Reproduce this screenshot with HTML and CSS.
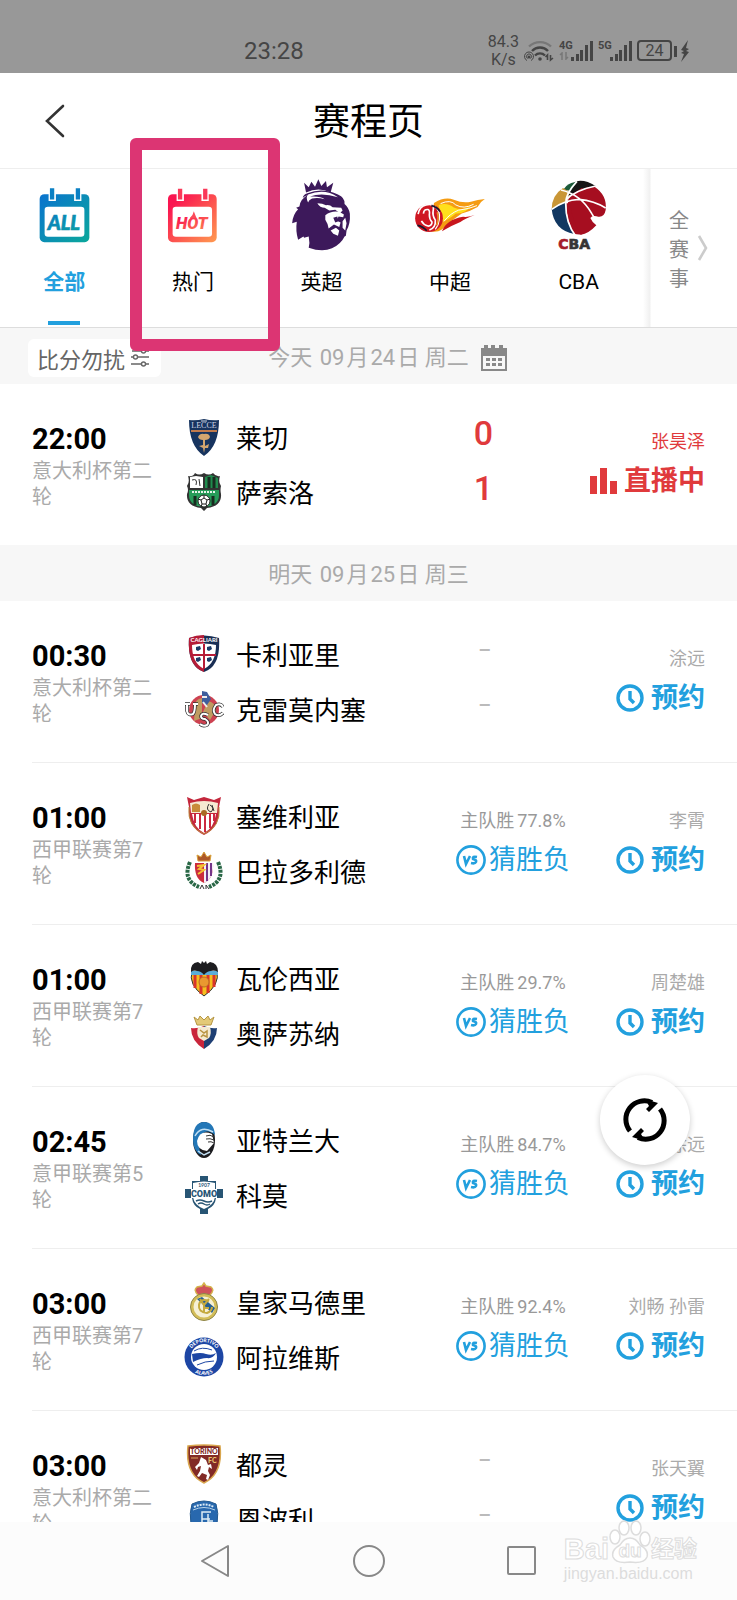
FILE: index.html
```html
<!DOCTYPE html>
<html lang="zh-CN">
<head>
    <meta charset="UTF-8">
    <meta name="viewport" content="width=device-width, initial-scale=1.0">
    <title>赛程页</title>
    <link rel="stylesheet" href="styles.css">
</head>
<body>
    <!-- 公用图标 -->
    <svg class="sprite" aria-hidden="true">
        <symbol id="icon-clock" viewBox="0 0 28 28">
            <circle cx="14" cy="14" r="12" fill="none" stroke="currentColor" stroke-width="3.400"/>
            <path d="M14 7v8l4 4" fill="none" stroke="currentColor" stroke-width="3.400"/>
        </symbol>
        <symbol id="icon-vs" viewBox="0 0 30 30">
            <circle cx="15" cy="15" r="13.6" fill="none" stroke="currentColor" stroke-width="2.6"/>
            <path d="M8 11l2 8 4-8M21 12q-5-1-4 2 4 1 3 3-1 2-5 1" fill="none" stroke="currentColor" stroke-width="2.600"/>
        </symbol>
        <symbol id="icon-signal" viewBox="0 0 22 22">
            <path d="M0 17h3v4H0zM5 14h3v7H5zM9 10h3v11H9zM14 5h3v16h-3zM19 1h3v20h-3z" fill="currentColor"/>
        </symbol>
    </svg>

    <div class="status-bar">
        <span class="clock">23:28</span>
        <div class="status-icons">
            <span class="speed">84.3<br>K/s</span>
            <svg class="wifi" viewBox="0 0 30 24" width="30" height="24" fill="none" stroke="#454545" stroke-width="2.4">
                <path d="M5 7.500a16 16 0 0 1 22 0" stroke="#777"/>
                <path d="M8 12a11 11 0 0 1 16 0M11 16.500a7 7 0 0 1 10 0"/>
                <circle cx="16" cy="20" r="1.800" fill="#454545" stroke="none"/>
                <circle cx="5" cy="18" r="1.500" fill="#454545" stroke="none"/>
                <path d="M3 21.500a4.500 4.500 0 1 1 4 0M3.500 19.500a2.500 2.500 0 1 1 3 0" stroke-width="1"/>
                <path d="M23.500 21v-5l-2 2M26.500 16v5l2.500-2" stroke-width="1.600"/>
            </svg>
            <div class="network">
                <span>4G
                    <svg viewBox="0 0 10 8" width="10" height="8" fill="none" stroke="#777" stroke-width="1.500"><path d="M3 8V1L1 3M7 0v7l2-2"/></svg>
                </span>
                <svg width="22" height="22"><use href="#icon-signal"/></svg>
            </div>
            <div class="network">
                <span>5G</span>
                <svg width="22" height="22"><use href="#icon-signal"/></svg>
            </div>
            <span class="battery">24</span>
            <svg class="bolt" viewBox="0 0 17 24" width="17" height="24" fill="#454545">
                <path d="M0 7h3v11H0zM14 1L7 11l3 1-3 2 3 1-3 8 8-10-3-1 3-2-3-1z"/>
            </svg>
        </div>
    </div>

    <header class="header">
        <button class="back" aria-label="返回">
            <svg viewBox="0 0 20 34" width="20" height="34" fill="none" stroke="#333" stroke-width="2.600" stroke-linecap="round"><path d="M18 2L2 17l16 15"/></svg>
        </button>
        <h1>赛程页</h1>
    </header>

    <nav class="leagues">
        <a href="#" class="league active">
            <span class="league-icon">
                <svg viewBox="0 0 160 174" width="53" height="58">
                    <defs>
                        <linearGradient id="blue" x1="0" y1="0" x2="1" y2="1"><stop offset="0" stop-color="#0a72cf"/><stop offset="1" stop-color="#0ba89b"/></linearGradient>
                    </defs>
                    <rect x="5" y="24" width="150" height="145" rx="14" fill="url(#blue)"/>
                    <path d="M32 20h22v25H32zM109 20h22v25h-22z" fill="#fff"/>
                    <path d="M36 6h13v34H36zM114 6h13v34h-13z" fill="#0b80c4"/>
                    <rect x="20" y="62" width="120" height="91" rx="10" fill="#fff"/>
                    <text x="78" y="132" text-anchor="middle" font-family="Lato, sans-serif" font-size="60" font-weight="900" font-style="italic" fill="url(#blue)" stroke="#098fae" stroke-width="2">ALL</text>
                </svg>
            </span>
            <span class="league-name">全部</span>
        </a>
        <a href="#" class="league">
            <span class="league-icon">
                <svg viewBox="0 0 160 174" width="53" height="58">
                    <defs>
                        <linearGradient id="red" x1="0" y1="0" x2="1" y2="1"><stop offset="0.150" stop-color="#fa1550"/><stop offset="1" stop-color="#ff9b50"/></linearGradient>
                    </defs>
                    <rect x="6" y="24" width="147" height="145" rx="14" fill="url(#red)"/>
                    <path d="M32 20h22v25H32zM107 20h22v25h-22z" fill="#fff"/>
                    <path d="M36 8h13v32H36zM112 8h13v32h-13z" fill="#fa3858"/>
                    <rect x="20" y="62" width="119" height="91" rx="10" fill="#fff"/>
                    <text x="78" y="130" text-anchor="middle" font-family="Roboto, sans-serif" font-size="50" font-weight="900" font-style="italic" fill="url(#red)">HOT</text>
                    <path d="M84 76q-2 12-12 20h20z" fill="#fb4a5a"/>
                </svg>
            </span>
            <span class="league-name">热门</span>
        </a>
        <a href="#" class="league">
            <span class="league-icon">
                <svg viewBox="0 0 186 226" width="62" height="75" fill="#3d195b">
                    <path d="M48 44L42 14l14 14 8-17 11 15 10-22 9 20 14-15 3 19 19-14-8 30Q86 26 48 44z"/>
                    <path d="M52 46q-12 4-14 14 6-6 14-8-22 12-24 34l-10 4 6 4q-16 16-18 42l14-4q-4 28 4 54l16-10 2 4 14-4q4 20 0 34 40 14 70 2 28-14 38-36l4-2 2-16q12-20 10-50-2-18-16-30 2-18-20-28Q98 28 52 46z"/>
                    <g fill="#fff">
                        <path d="M54 50q50-20 90 8-50-16-84-2 32-2 44 8-20-6-38-2-10 4-12 12-8-16 0-24z"/>
                        <path d="M82 76q16 0 26 6 12-2 20 6l26 2 4 8-8 8-14-10-18 2-14-8q-14 0-22-14z"/>
                        <path d="M106 112q18-14 42-10l14 8-2 8-14-2-6 12 12 6-4 14-16-8-16 12q-2-14-10-26z"/>
                        <path d="M158 130l8-10 4 16-4 22-8-8zM122 158l16-8 10 8-4 16-14-6z"/>
                    </g>
                    <path d="M130 120l12-4 4 14-10 4z"/>
                </svg>
            </span>
            <span class="league-name">英超</span>
        </a>
        <a href="#" class="league">
            <span class="league-icon">
                <svg viewBox="0 0 220 112" width="73" height="37">
                    <path d="M60 18Q92-2 120 8q28 12 52 6 20-6 42-8-14 8-22 24-20 12-48 20-34 22-60 48-14 10-36 6z" fill="#f59c12"/>
                    <path d="M74 24q28-8 46 8 28 12 52-6-16 26-46 24-22 20-42 24z" fill="#ffe01c"/>
                    <path d="M84 104q14-36 64-44 20 2 36-6-30 12-44 22-30 12-56 28z" fill="#c8161d"/>
                    <path d="M80 20q30-14 46 4 24 14 54-2M90 74q18-24 44-34 34-4 56-14" fill="none" stroke="#fff" stroke-width="3"/>
                    <circle cx="45" cy="64" r="42" fill="#cf1722"/>
                    <path d="M12 52q4-24 24-28 26-6 22 14-4 18 6 32 2 24-18 30" fill="none" stroke="#fff" stroke-width="5"/>
                    <path d="M28 50q2-14 14-12 6 2 4 16 0 14 8 22 0 12-12 12-14-4-20-16" fill="none" stroke="#fff" stroke-width="5"/>
                    <path d="M62 28q18 14 14 40-2 18-12 30" fill="none" stroke="#fff" stroke-width="4"/>
                    <path d="M10 86q18 4 28 16M52 26q18 4 26 18" fill="none" stroke="#17192d" stroke-width="5"/>
                    <path d="M70 46q6 20-2 40" fill="none" stroke="#e98c25" stroke-width="5"/>
                </svg>
            </span>
            <span class="league-name">中超</span>
        </a>
        <a href="#" class="league">
            <span class="league-icon">
                <svg viewBox="0 0 168 210" width="56" height="70">
                    <path d="M52 56Q90 2 120 14q50 26 44 76-4 22-22 20-18-6-24 4 6 14 18 22-24 26-46 28-22-14-32-40-10-30-6-68z" fill="#a60e20"/>
                    <path d="M48 50Q56 16 76 4 102-2 134 18l-18 6-6-4-10 8-8-4-14 10z" fill="#151515"/>
                    <path d="M46 18Q60 6 78 5L60 32l-24-2z" fill="#1c5b3a"/>
                    <path d="M36 24l20 12-8 28-46 24Q2 46 36 24z" fill="#c99636"/>
                    <path d="M2 86l42-20q-2 54 26 96Q8 150 2 86z" fill="#113761"/>
                    <path d="M58 70q4 54 34 94l-22-2Q44 120 46 70z" fill="#a60e20"/>
                    <path d="M78 4Q44 40 44 70q0 60 30 98M2 88q38-28 82-30 46 4 80 26M30 30q60 14 92 70 14 22 20 38M44 60Q74 30 134 18" fill="none" stroke="#fff" stroke-width="5"/>
                    <text x="22" y="206" font-family="'DejaVu Sans', sans-serif" font-size="42" font-weight="700" fill="#353535" stroke="#353535" stroke-width="2"><tspan fill="#a61b2b" stroke="#a61b2b">C</tspan>BA</text>
                </svg>
            </span>
            <span class="league-name">CBA</span>
        </a>
        <button class="all-leagues">
            <span>全<br>赛<br>事</span>
            <svg viewBox="0 0 12 26" width="12" height="26" fill="none" stroke="#ccc" stroke-width="2.600"><path d="M2 1l7 12-7 12"/></svg>
        </button>
    </nav>

    <main class="schedule">
        <div class="date-bar today">
            <button class="no-disturb">比分勿扰
                <svg viewBox="0 0 18 18" width="18" height="18" fill="none" stroke="#666" stroke-width="1.400">
                    <path d="M1 2h9M15 2h3M0 8h2M7 8h11M0 15h10M15 15h3"/>
                    <circle cx="12.500" cy="2" r="2"/><circle cx="4.500" cy="8" r="2"/><circle cx="12.500" cy="15" r="2"/>
                </svg>
            </button>
            <h2>今天 <b>09</b>月<b>24</b>日 周二</h2>
            <button class="calendar" aria-label="选择日期">
                <svg viewBox="0 0 26 26" width="26" height="26" fill="#888">
                    <path d="M0 3h3V0h4v3h3V0h4v3h4V0h4v3h4v23H0zM2 11v13h22V11z" fill-rule="evenodd"/>
                    <path d="M5 13h4v3H5zM11 13h4v3h-4zM17 13h4v3h-4zM5 18h4v3H5zM11 18h4v3h-4zM17 18h4v3h-4z"/>
                </svg>
            </button>
        </div>

        <article class="match last">
            <div class="when">
                <time>22:00</time>
                <p>意大利杯第二轮</p>
            </div>
            <ul class="teams">
                <li>
                    <svg viewBox="0 0 40 40">
                        <path d="M5 3q7 1 15-1 8 2 15 1 0 26-15 36Q5 29 5 3z" fill="#17345f"/>
                        <path d="M7 14h26" stroke="#c07a4c" stroke-width="2"/>
                        <text x="20" y="11" text-anchor="middle" font-family="Liberation Serif, serif" font-size="8" fill="#cfd6e4">LECCE</text>
                        <path d="M17 4h6" stroke="#cfd6e4"/>
                        <path d="M14 20q2-4 6-3 5-1 6 3-1 3-5 3v6l4-2-1 4h-3l-1 5-1-5-4-2 4-1v-5q-4 0-5-3z" fill="#d3a66f"/>
                    </svg>
                    莱切
                </li>
                <li>
                    <svg viewBox="0 0 40 40">
                        <path d="M4 4q5 1 7-3 4 3 9 0 5 3 9 0 3 4 7 3-2 6 1 10-1 4 0 8 1 12-14 14l-3 3-3-3Q2 34 3 22q2-4 0-8 3-4 1-10z" fill="#333"/>
                        <path d="M6 5l6-1 7 1v11H6z" fill="#fff"/>
                        <path d="M21 5l6-2 7 3v10H21z" fill="#208a4d"/>
                        <path d="M5 18h30v5q0 11-15 12Q5 34 5 23z" fill="#269c59"/>
                        <path d="M25 5v11M30 5v11M11 24v9M29 24v9" stroke="#182b20" stroke-width="3"/>
                        <path d="M8 8q6-2 4 5M15 7l1 7" stroke="#333" fill="none"/>
                        <path d="M8 20h24" stroke="#e7f3ea" stroke-width="2" stroke-dasharray="2 1"/>
                        <circle cx="20" cy="29" r="6" fill="#fff" stroke="#222"/>
                        <path d="M20 26l3 2-1 4h-4l-1-4zM20 26v-3M23 28l3-1M22 32l1 3M18 32l-1 3M17 28l-3-1" fill="none" stroke="#222"/>
                    </svg>
                    萨索洛
                </li>
            </ul>
            <div class="score live"><span>0</span><span>1</span></div>
            <div class="watch live">
                <p>张昊泽</p>
                <button>
                    <svg viewBox="0 0 28 26" width="28" height="26" fill="currentColor"><path d="M1 8h7v18H1zM11 0h7v26h-7zM21 13h7v13h-7z"/></svg>
                    直播中
                </button>
            </div>
        </article>

        <div class="date-bar">
            <h2>明天 <b>09</b>月<b>25</b>日 周三</h2>
        </div>

        <article class="match">
            <div class="when">
                <time>00:30</time>
                <p>意大利杯第二轮</p>
            </div>
            <ul class="teams">
                <li>
                    <svg viewBox="0 0 40 40">
                        <path d="M5 4q15-5 30 0 2 28-15 34Q3 32 5 4z" fill="#192e54"/>
                        <path d="M5 4q7-3 15-3v37Q3 32 5 4z" fill="#b51c37"/>
                        <path d="M8 11q12-3 24 0 0 18-12 24Q8 29 8 11z" fill="#fff"/>
                        <path d="M20 10v25M8 21h24" stroke="#b51c37" stroke-width="2"/>
                        <text x="20" y="8" text-anchor="middle" font-family="Lato, sans-serif" font-size="6" font-weight="700" fill="#fff">CAGLIARI</text>
                        <path d="M12 13l4-1 1 3-3 2-2-1zM23 13l4-1 1 3-3 2-2-1zM12 24l4-1 1 3-3 2-2-1zM23 24l4-1 1 3-3 2-2-1z" fill="#1b3a66"/>
                    </svg>
                    卡利亚里
                </li>
                <li>
                    <svg viewBox="0 0 40 40">
                        <circle cx="20" cy="21" r="15" fill="#cd4251"/>
                        <path d="M11 17q0-7 7-8v20l-8 3zM24 12q8 2 8 9l-6 10-7-8z" fill="#bf9b61"/>
                        <path d="M18 2l5 1 4 7-4 6-5-2z" fill="#3f5e9d"/>
                        <path d="M18 8h5M19 13l4 5" stroke="#eee" stroke-width="2"/>
                        <path d="M1 15h5M3 15v7q1 5 6 3 2-2 2-10M9 15h5M24 26q-6-3-7 1 0 3 4 3 5 3 2 6-4 2-7-1M39 18q-2-4-7-2-4 5-1 9 4 3 8-1" fill="none" stroke="#333" stroke-width="3.500"/>
                        <path d="M1 15h5M3 15v7q1 5 6 3 2-2 2-10M9 15h5M24 26q-6-3-7 1 0 3 4 3 5 3 2 6-4 2-7-1M39 18q-2-4-7-2-4 5-1 9 4 3 8-1" fill="none" stroke="#fff" stroke-width="2"/>
                    </svg>
                    克雷莫内塞
                </li>
            </ul>
            <div class="score"><span>–</span><span>–</span></div>
            <div class="watch">
                <p>涂远</p>
                <button><svg width="28" height="28"><use href="#icon-clock"/></svg>预约</button>
            </div>
        </article>

        <article class="match">
            <div class="when">
                <time>01:00</time>
                <p>西甲联赛第7轮</p>
            </div>
            <ul class="teams">
                <li>
                    <svg viewBox="0 0 40 40">
                        <path d="M3 1l7 3 10-3 10 3 7-3-2 10q2 20-15 28Q3 31 5 11z" fill="#c4273c"/>
                        <path d="M6 7q14-4 28 0l-1 10H7z" fill="#f6ead2"/>
                        <path d="M8 18h24q-2 14-12 19Q10 32 8 18z" fill="#fff"/>
                        <path d="M11 18v9M16 18v15M21 18v18M26 18v14M30 18v7" stroke="#cc2940" stroke-width="2"/>
                        <path d="M8 9q4-3 8 0v7H8z" fill="#c88b3a"/>
                        <path d="M25 8q-4 6 2 8 4-4-1-7M28 9l2 6" stroke="#333" fill="none"/>
                        <circle cx="20" cy="17" r="3" fill="#a96a24"/>
                        <path d="M5 11q-2 20 15 27 17-7 15-27" fill="none" stroke="#b98a3b"/>
                    </svg>
                    塞维利亚
                </li>
                <li>
                    <svg viewBox="0 0 40 40">
                        <path d="M6 11q-8 18 9 25M34 11q8 18-9 25" fill="none" stroke="#2a6847" stroke-width="4" stroke-dasharray="3 1"/>
                        <path d="M14 10l-1-6 4 2 3-5 3 5 4-2-1 6z" fill="#ad5729" stroke="#d9a13b"/>
                        <path d="M11 12h18q1 16-9 20-10-4-9-20z" fill="#cb2c3d"/>
                        <path d="M20 12h9q1 16-9 20z" fill="#f4eef8"/>
                        <path d="M23 12v18M27 12v13" stroke="#753589" stroke-width="2"/>
                        <path d="M13 15l7-1-5 4 5 1-6 4" fill="none" stroke="#f4c332" stroke-width="2"/>
                        <path d="M16 38l2-4 2 4M22 38v-4l3 4" fill="none" stroke="#333"/>
                    </svg>
                    巴拉多利德
                </li>
            </ul>
            <div class="guess">
                <p>主队胜<b>77.8%</b></p>
                <button><svg width="30" height="30"><use href="#icon-vs"/></svg>猜胜负</button>
            </div>
            <div class="watch">
                <p>李霄</p>
                <button><svg width="28" height="28"><use href="#icon-clock"/></svg>预约</button>
            </div>
        </article>

        <article class="match">
            <div class="when">
                <time>01:00</time>
                <p>西甲联赛第7轮</p>
            </div>
            <ul class="teams">
                <li>
                    <svg viewBox="0 0 40 40">
                        <path d="M8 13h25q3 14-13 25Q4 27 8 13z" fill="#f4bf1f" stroke="#333"/>
                        <path d="M11 17v13M17 17v19M24 17v18M30 17v12" stroke="#d9352a" stroke-width="3"/>
                        <path d="M7 13h27v4H7z" fill="#5badd8"/>
                        <path d="M7 14Q6 5 14 4l3 2 1-3 2 2 2-2 1 3 3-2q8 1 8 10-4-3-7-1-4 0-7 4-3-4-7-4-3-2-6 1z" fill="#1d1d20"/>
                        <circle cx="20" cy="24" r="5" fill="#ea9830" stroke="#bd6b24"/>
                    </svg>
                    瓦伦西亚
                </li>
                <li>
                    <svg viewBox="0 0 40 40">
                        <path d="M13 12l-3-8 4 3 2-4 4 4 4-4 2 4 4-3-3 8z" fill="#e3c977" stroke="#b59542"/>
                        <path d="M7 15q6 1 13-2v23Q7 28 7 15z" fill="#c9253b"/>
                        <path d="M33 15q-6 1-13-2v23q13-8 13-21z" fill="#1e3f74"/>
                        <path d="M14 14h12q2 7-1 11l-5 3-5-3q-3-4-1-11z" fill="#f5ead1"/>
                        <path d="M16 17l4 3 3-2v6l-4-2-2 2" fill="none" stroke="#b99442" stroke-width="1.500"/>
                    </svg>
                    奥萨苏纳
                </li>
            </ul>
            <div class="guess">
                <p>主队胜<b>29.7%</b></p>
                <button><svg width="30" height="30"><use href="#icon-vs"/></svg>猜胜负</button>
            </div>
            <div class="watch">
                <p>周楚雄</p>
                <button><svg width="28" height="28"><use href="#icon-clock"/></svg>预约</button>
            </div>
        </article>

        <article class="match">
            <div class="when">
                <time>02:45</time>
                <p>意甲联赛第5轮</p>
            </div>
            <ul class="teams">
                <li>
                    <svg viewBox="0 0 40 40">
                        <ellipse cx="20" cy="20" rx="11" ry="18" fill="#1b1b1e"/>
                        <path d="M9 20Q9 2 20 2q10 0 11 13-8-7-14 0-4 8 0 20-8-4-8-15z" fill="#2377b7"/>
                        <path d="M13 21q3-12 15-7l2 9-7 8q-10-1-10-10z" fill="#fff"/>
                        <path d="M11 16q6-11 18-4M14 31l6 4 6-3" fill="none" stroke="#c2dff2" stroke-width="1.500"/>
                        <path d="M22 16q4-2 8 1M22 19q4-1 8 1M24 22q3-1 6 1" fill="none" stroke="#333" stroke-width="1"/>
                    </svg>
                    亚特兰大
                </li>
                <li>
                    <svg viewBox="0 0 40 40">
                        <path d="M16 1h8v5h8v8h7v9h-7q-1 8-8 11v5h-8v-5q-7-3-8-11H1v-9h7V6h8z" fill="#285574"/>
                        <path d="M9 8q11-3 22 0v14q-1 8-11 12Q10 30 9 22z" fill="#fff"/>
                        <path d="M7 14h26v9H7z" fill="#fff"/>
                        <text x="20" y="22" text-anchor="middle" font-family="Roboto, sans-serif" font-size="9" font-weight="900" fill="#285574">COMO</text>
                        <text x="20" y="12" text-anchor="middle" font-family="Lato, sans-serif" font-size="5" font-weight="700" fill="#285574">1907</text>
                        <path d="M12 26q4-2 8 0t8 0M14 29q3-2 6 0t6 0" fill="none" stroke="#285574" stroke-width="1.500"/>
                    </svg>
                    科莫
                </li>
            </ul>
            <div class="guess">
                <p>主队胜<b>84.7%</b></p>
                <button><svg width="30" height="30"><use href="#icon-vs"/></svg>猜胜负</button>
            </div>
            <div class="watch">
                <p>涂远</p>
                <button><svg width="28" height="28"><use href="#icon-clock"/></svg>预约</button>
            </div>
        </article>

        <article class="match">
            <div class="when">
                <time>03:00</time>
                <p>西甲联赛第7轮</p>
            </div>
            <ul class="teams">
                <li>
                    <svg viewBox="0 0 40 40">
                        <path d="M14 13q-5-5-1-8l5-1 2-3 2 3 5 1q4 3-1 8z" fill="#cf535b" stroke="#d5b34c" stroke-width="1.500"/>
                        <circle cx="20" cy="25" r="12" fill="#f6f0d4" stroke="#d3bd57" stroke-width="3"/>
                        <path d="M13 17l15 14 3-5-13-11z" fill="#275f8f"/>
                        <path d="M25 19q-9-3-10 4t8 8q5-2 5-6M16 17l4 6 5-6M20 21v10h5M20 26h5" fill="none" stroke="#c5aa3e" stroke-width="2"/>
                        <circle cx="20" cy="25" r="13.500" fill="none" stroke="#8d8448" stroke-width="1"/>
                    </svg>
                    皇家马德里
                </li>
                <li>
                    <svg viewBox="0 0 40 40">
                        <circle cx="20" cy="20" r="19.500" fill="#1d46a4"/>
                        <circle cx="20" cy="20" r="13" fill="#fff"/>
                        <path id="arc-top" d="M5 20a15 15 0 0 1 30 0" fill="none"/>
                        <path id="arc-bottom" d="M2 20a18 18 0 0 0 36 0" fill="none"/>
                        <g font-family="Lato, sans-serif" font-size="5" font-weight="900" fill="#fff" text-anchor="middle">
                            <text><textPath href="#arc-top" startOffset="50%">DEPORTIVO</textPath></text>
                            <text><textPath href="#arc-bottom" startOffset="50%">ALAVES</textPath></text>
                        </g>
                        <path d="M8 17q9-2 14 0 6 2 10-1-3 6-9 5-6 0-14 4z" fill="#1d46a4"/>
                        <path d="M10 14q8-5 18-1M13 28q8-4 17-4" fill="none" stroke="#1d46a4"/>
                    </svg>
                    阿拉维斯
                </li>
            </ul>
            <div class="guess">
                <p>主队胜<b>92.4%</b></p>
                <button><svg width="30" height="30"><use href="#icon-vs"/></svg>猜胜负</button>
            </div>
            <div class="watch">
                <p>刘畅 孙雷</p>
                <button><svg width="28" height="28"><use href="#icon-clock"/></svg>预约</button>
            </div>
        </article>

        <article class="match">
            <div class="when">
                <time>03:00</time>
                <p>意大利杯第二轮</p>
            </div>
            <ul class="teams">
                <li>
                    <svg viewBox="0 0 40 40">
                        <path d="M4 2q16-2 32 0 3 28-16 37Q1 30 4 2z" fill="#822a26" stroke="#d9a64e" stroke-width="1.500"/>
                        <path d="M6 4h28v7H6z" fill="#fff"/>
                        <text x="20" y="10" text-anchor="middle" font-family="Lato, sans-serif" font-size="7" font-weight="900" fill="#822a26">TORINO</text>
                        <text x="24" y="19" font-family="Lato, sans-serif" font-size="7" font-weight="900" fill="#e9c571">FC</text>
                        <path d="M7 14h7" stroke="#dba25d"/>
                        <path d="M17 13l5 3 2 5 3-1 1 5-3-2-1 4 2 4-2 5-2-1 1-4-5-2-3 4-2-1 3-5 1-5-3 1-1 3-2-3 4-4z" fill="#fff"/>
                    </svg>
                    都灵
                </li>
                <li>
                    <svg viewBox="0 0 40 40">
                        <path d="M8 5q12-6 24 0 3 9 1 20-3 8-13 12Q10 33 7 25 5 14 8 5z" fill="#2868ae" stroke="#23598f"/>
                        <path d="M9 11q11-5 22 0" fill="none" stroke="#b9d4ea"/>
                        <path d="M10 8q10-5 20 0" fill="none" stroke="#dcebf5" stroke-width="2" stroke-dasharray="2 1"/>
                        <path d="M27 13h-9v19M18 20h8M24 15v14h-9M24 22h5" fill="none" stroke="#dcebf5" stroke-width="1.500"/>
                    </svg>
                    恩波利
                </li>
            </ul>
            <div class="score"><span>–</span><span>–</span></div>
            <div class="watch">
                <p>张天翼</p>
                <button><svg width="28" height="28"><use href="#icon-clock"/></svg>预约</button>
            </div>
        </article>
    </main>

    <footer class="system-nav">
        <button aria-label="返回">
            <svg viewBox="0 0 32 34" width="32" height="34"><path d="M28 2v30L2 17z"/></svg>
        </button>
        <button aria-label="主屏幕">
            <svg viewBox="0 0 34 34" width="34" height="34"><circle cx="17" cy="17" r="15"/></svg>
        </button>
        <button aria-label="最近任务">
            <svg viewBox="0 0 32 32" width="32" height="32"><rect x="2" y="2" width="27" height="27" rx="1"/></svg>
        </button>
        <div class="watermark">
            <div class="brand">
                <span>Bai</span>
                <span class="paw">
                    <svg viewBox="0 0 42 44" width="42" height="44" fill="#fff" stroke="#ddd" stroke-width="1.500">
                        <ellipse cx="6" cy="17" rx="5" ry="7"/><ellipse cx="15" cy="8" rx="5" ry="7"/><ellipse cx="27" cy="8" rx="5" ry="7"/><ellipse cx="36" cy="19" rx="5" ry="7"/>
                        <path d="M21 18q6 0 10 7 9 5 7 12-3 7-17 5-14 2-17-5-2-7 7-12 4-7 10-7z"/>
                    </svg>
                    <i>du</i>
                </span>
                <span class="cn">经验</span>
            </div>
            <div class="site">jingyan.baidu.com</div>
        </div>
    </footer>

    <button class="refresh" aria-label="刷新">
        <svg viewBox="0 0 44 44" width="44" height="44">
            <path d="M7 33A18.500 18.500 0 0 1 29 4.500M37 11A18.500 18.500 0 0 1 15 39.500" fill="none" stroke="#000" stroke-width="5"/>
            <path d="M22 1l13 4-9 9-3-3 3-3zM22 43L9 39l9-9 3 3-3 3z"/>
        </svg>
    </button>

    <!-- 热门标签的高亮框 -->
    <div class="highlight"></div>
</body>
</html>
```

FILE: styles.css
```css
* {
    box-sizing: border-box;
    margin: 0;
    padding: 0;
}

body {
    position: relative;
    display: flex;
    flex-direction: column;
    height: 100vh;
    overflow: hidden;
    background: #fff;
    color: #000;
    font-family: Roboto, 'Noto Sans CJK SC', sans-serif;
}

button {
    border: none;
    background: none;
    color: inherit;
    font: inherit;
    cursor: pointer;
}

a {
    color: inherit;
    text-decoration: none;
}

svg {
    display: block;
    flex: none;
}

.sprite {
    display: none;
}

/* 状态栏 */
.status-bar {
    flex: none;
    display: flex;
    justify-content: space-between;
    align-items: center;
    height: 73px;
    padding: 28px 46px 0 244px;
    background: #989898;
    color: #454545;
}

.clock {
    font-size: 24px;
}

.status-icons {
    display: flex;
    align-items: center;
    gap: 5px;
}

.speed {
    font-size: 16px;
    line-height: 18px;
    text-align: center;
}

.network {
    display: flex;
    align-items: center;
}

.network span {
    align-self: flex-start;
    width: 12px;
    font-size: 11px;
    font-weight: bold;
    line-height: 12px;
    white-space: nowrap;
}

.battery {
    width: 35px;
    border: 2px solid #454545;
    border-radius: 4px;
    font-size: 16px;
    line-height: 17px;
    text-align: center;
}

.bolt {
    margin-left: -3px;
}

/* 标题栏 */
.header {
    flex: none;
    display: grid;
    grid-template-columns: 1fr auto 1fr;
    align-items: center;
    height: 96px;
    border-bottom: 1px solid #eee;
}

.back {
    justify-self: start;
    margin-left: 45px;
}

.header h1 {
    padding-top: 4px;
    font-size: 37px;
    font-weight: normal;
    line-height: 48px;
}

/* 赛事分类 */
.leagues {
    flex: none;
    display: flex;
    border-bottom: 1px solid #ddd;
}

.league {
    flex: 1;
    display: flex;
    flex-direction: column;
    align-items: center;
    padding-top: 8px;
}

.league-icon {
    display: flex;
    align-items: center;
    height: 76px;
}

.league-name {
    margin-top: 15px;
    font-size: 21px;
    line-height: 28px;
}

.league::after {
    content: '';
    width: 32px;
    height: 4px;
    margin: 25px 0 2px;
}

.league.active {
    color: #22a0de;
    font-weight: bold;
}

.league.active::after {
    background: #22a0de;
}

.all-leagues {
    display: flex;
    align-items: center;
    gap: 8px;
    width: 94px;
    padding-left: 26px;
    background: linear-gradient(to right, #fff, #f0f0f0 7px, #fff 8px);
    color: #888;
    font-size: 20px;
    line-height: 29px;
}

.all-leagues span {
    padding-top: 4px;
}

/* 日期栏 */
.schedule {
    flex: 1;
    min-height: 0;
    overflow: hidden;
}

.date-bar {
    display: grid;
    grid-template-columns: 1fr auto 1fr;
    align-items: center;
    height: 56px;
    padding-top: 3px;
    background: #f7f7f7;
    color: #aaa;
}

.date-bar h2 {
    grid-column: 2;
    font-size: 22px;
    font-weight: normal;
    line-height: 32px;
}

.date-bar b {
    margin: 0 2px;
    font-weight: normal;
}

.no-disturb {
    justify-self: start;
    display: flex;
    align-items: center;
    gap: 6px;
    height: 38px;
    margin-left: 28px;
    padding: 0 12px 0 9px;
    border-radius: 6px;
    background: #fff;
    color: #666;
    font-size: 22px;
}

.calendar {
    justify-self: start;
    margin-left: 12px;
}

/* 比赛 */
.match {
    display: grid;
    grid-template-columns: 152px 1fr 128px 128px;
    align-items: start;
    margin-left: 32px;
    padding: 22px 32px 25px 0;
    border-bottom: 1px solid #eee;
}

.match.last {
    border-bottom: none;
}

.when {
    width: 120px;
    padding-top: 16px;
}

.when time {
    display: block;
    font-size: 29px;
    font-weight: bold;
    line-height: 34px;
}

.when p {
    margin-top: 2px;
    color: #aaa;
    font-size: 20px;
    line-height: 26px;
}

.teams {
    padding-top: 3px;
}

.teams li {
    display: flex;
    align-items: center;
    gap: 12px;
    height: 55px;
    font-size: 26px;
    list-style: none;
}

.teams li:last-child {
    margin-bottom: 1px;
}

.teams svg {
    width: 40px;
    height: 40px;
}

.score {
    width: 42px;
    color: #bbb;
    font-size: 20px;
    font-weight: 500;
    line-height: 55px;
    text-align: right;
}

.score span {
    display: block;
}

.score.live {
    width: 44px;
    color: #e03a3c;
    font-size: 34px;
}

.guess,
.watch {
    display: flex;
    flex-direction: column;
    gap: 7px;
    padding-top: 24px;
    color: #aaa;
    font-size: 18px;
    line-height: 24px;
}

.guess {
    align-items: center;
    color: #999;
}

.guess b {
    margin-left: 3px;
    font-weight: normal;
}

.watch {
    align-items: flex-end;
}

.guess button,
.watch button {
    display: flex;
    align-items: center;
    gap: 3px;
    color: #22a0de;
    font-size: 27px;
    line-height: 40px;
    white-space: nowrap;
}

.watch button {
    gap: 7px;
    font-weight: bold;
}

.watch.live,
.watch.live button {
    color: #e03a3c;
}

/* 刷新按钮 */
.refresh {
    position: absolute;
    right: 47px;
    bottom: 435px;
    display: flex;
    align-items: center;
    justify-content: center;
    width: 90px;
    height: 90px;
    border-radius: 50%;
    background: #fff;
    box-shadow: 0 2px 6px rgba(0, 0, 0, 0.2);
}

/* 系统导航 */
.system-nav {
    position: relative;
    flex: none;
    display: flex;
    justify-content: center;
    align-items: center;
    gap: 119px;
    height: 78px;
    background: #fcfcfc;
}

.system-nav button svg {
    fill: none;
    stroke: #888;
    stroke-width: 2;
    stroke-linejoin: round;
}

.system-nav button {
    display: flex;
    justify-content: center;
    width: 34px;
}

.watermark {
    position: absolute;
    right: 40px;
    bottom: 16px;
    color: #fff;
    font-family: 'Liberation Sans', 'Noto Sans CJK SC', sans-serif;
    -webkit-text-stroke: 1px #ddd;
}

.brand {
    display: flex;
    align-items: flex-end;
    font-size: 29px;
    font-weight: bold;
    line-height: 30px;
}

.brand .cn {
    font-size: 23px;
}

.paw {
    position: relative;
}

.paw i {
    position: absolute;
    right: 0;
    bottom: 0;
    left: 0;
    font-size: 19px;
    font-style: normal;
    line-height: 26px;
    text-align: center;
}

.site {
    color: #ddd;
    font-size: 16px;
    line-height: 20px;
    -webkit-text-stroke: 0;
}

/* 高亮框 */
.highlight {
    position: absolute;
    top: 138px;
    left: 130px;
    width: 150px;
    height: 213px;
    border: 12px solid #dc3573;
    border-radius: 6px;
    pointer-events: none;
}
```
